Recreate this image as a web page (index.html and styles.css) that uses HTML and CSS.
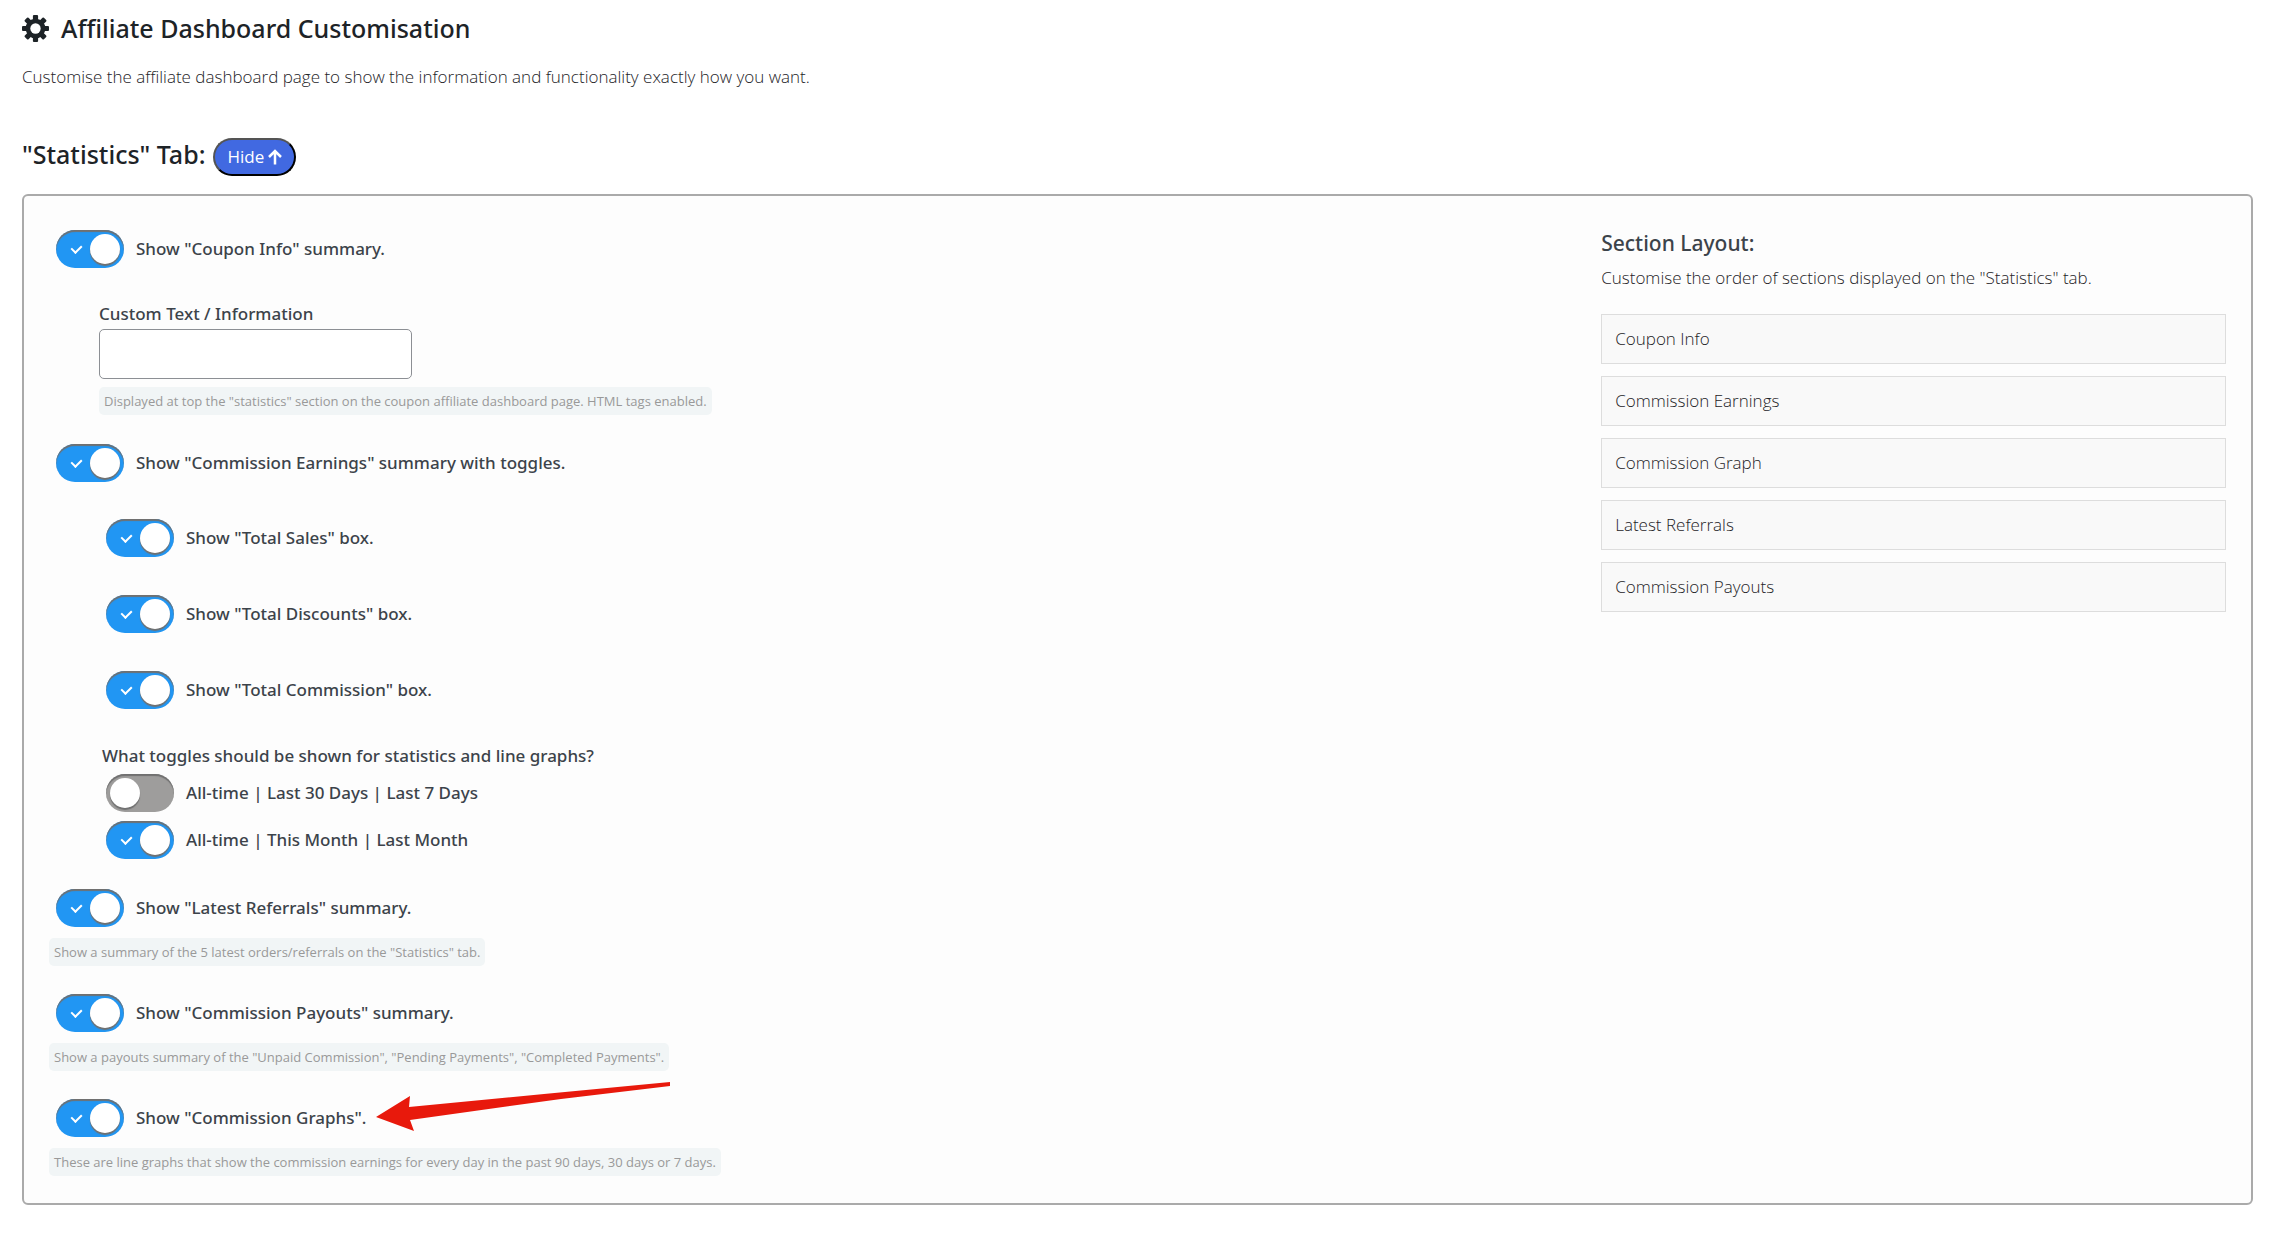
FILE: index.html
```html
<!DOCTYPE html>
<html lang="en">
<head>
<meta charset="utf-8">
<title>Affiliate Dashboard Customisation</title>
<link rel="stylesheet" href="styles.css">
</head>
<body>
<main class="page">
  <h1 class="title">
    <svg class="gear" viewBox="0 0 26 26" aria-hidden="true">
      <g fill="#1d2327">
        <rect x="10.500" y="0" width="5" height="26" rx="1"/>
        <rect x="10.500" y="0" width="5" height="26" rx="1" transform="rotate(45 13 13)"/>
        <rect x="10.500" y="0" width="5" height="26" rx="1" transform="rotate(90 13 13)"/>
        <rect x="10.500" y="0" width="5" height="26" rx="1" transform="rotate(135 13 13)"/>
        <circle cx="13" cy="13" r="9.500"/>
      </g>
      <circle cx="13" cy="13" r="5" fill="#fff"/>
    </svg>
    Affiliate Dashboard Customisation
  </h1>
  <p class="intro">Customise the affiliate dashboard page to show the information and functionality exactly how you want.</p>

  <div class="tab-head">
    <h2 class="title">"Statistics" Tab:</h2>
    <button class="hide" type="button">Hide
      <svg class="arrow-up" viewBox="0 0 14 16" aria-hidden="true"><path d="M7 15.500V2M1 8l6-6 6 6" fill="none" stroke="#fff" stroke-width="2.500"/></svg>
    </button>
  </div>

  <section class="panel">
    <form class="options">
      <label class="option"><input class="switch" type="checkbox" checked>Show "Coupon Info" summary.</label>
      <div class="field">
        <label for="custom-text">Custom Text / Information</label>
        <input class="text" id="custom-text" type="text">
        <p class="hint">Displayed at top the "statistics" section on the coupon affiliate dashboard page. HTML tags enabled.</p>
      </div>
      <label class="option"><input class="switch" type="checkbox" checked>Show "Commission Earnings" summary with toggles.</label>
      <div class="boxes">
        <label class="option"><input class="switch" type="checkbox" checked>Show "Total Sales" box.</label>
        <label class="option"><input class="switch" type="checkbox" checked>Show "Total Discounts" box.</label>
        <label class="option"><input class="switch" type="checkbox" checked>Show "Total Commission" box.</label>
      </div>
      <fieldset class="ranges">
        <legend>What toggles should be shown for statistics and line graphs?</legend>
        <label class="option"><input class="switch" type="checkbox">All-time | Last 30 Days | Last 7 Days</label>
        <label class="option"><input class="switch" type="checkbox" checked>All-time | This Month | Last Month</label>
      </fieldset>
      <div class="summary">
        <label class="option"><input class="switch" type="checkbox" checked>Show "Latest Referrals" summary.</label>
        <p class="hint">Show a summary of the 5 latest orders/referrals on the "Statistics" tab.</p>
      </div>
      <div class="summary">
        <label class="option"><input class="switch" type="checkbox" checked>Show "Commission Payouts" summary.</label>
        <p class="hint">Show a payouts summary of the "Unpaid Commission", "Pending Payments", "Completed Payments".</p>
      </div>
      <div class="summary">
        <label class="option"><input class="switch" type="checkbox" checked>Show "Commission Graphs".</label>
        <p class="hint">These are line graphs that show the commission earnings for every day in the past 90 days, 30 days or 7 days.</p>
        <svg class="pointer" viewBox="0 0 294 50" aria-hidden="true"><path d="M0 35L34 14 33 25 168 12 294 0V4L185 17 34 38 38 49Z" fill="#e8190c"/></svg>
      </div>
    </form>
    <aside class="layout">
      <h3 class="layout-title">Section Layout:</h3>
      <p class="layout-text">Customise the order of sections displayed on the "Statistics" tab.</p>
      <ul class="order">
        <li>Coupon Info</li>
        <li>Commission Earnings</li>
        <li>Commission Graph</li>
        <li>Latest Referrals</li>
        <li>Commission Payouts</li>
      </ul>
    </aside>
  </section>
</main>
</body>
</html>
```
FILE: styles.css
```css
* { box-sizing: border-box; }

body {
  margin: 0;
  background: #fff;
  color: #3c434a;
  font: 17px/26px "Open Sans", "Noto Sans", sans-serif;
}

h1, h2, h3, p, ul { margin: 0; }

.page { padding: 12px 20px 24px 22px; }

.title {
  display: flex;
  align-items: center;
  gap: 12px;
  color: #1d2327;
  font-family: "Noto Sans", "Open Sans", sans-serif;
  font-size: 25px;
  line-height: 32px;
  font-weight: 500;
}

.gear { width: 27px; height: 27px; }

.intro { margin-top: 20px; color: #1d2327; font-weight: 300; }

.tab-head {
  display: flex;
  align-items: flex-start;
  gap: 8px;
  margin-top: 48px;
}

.hide {
  display: flex;
  align-items: center;
  gap: 4px;
  height: 38px;
  padding: 0 12px;
  border: 2px outset #000;
  border-radius: 19px;
  background: #4169e1;
  color: #fff;
  font: inherit;
}

.arrow-up { width: 14px; height: 16px; }

.panel {
  display: grid;
  grid-template-columns: minmax(0, 1fr) 28.7%;
  margin-top: 18px;
  padding: 34px 25px 27px;
  border: 2px solid #aaa;
  border-radius: 6px;
  background: #fdfdfd;
}

.options {
  font-family: "Noto Sans", "Open Sans", sans-serif;
  font-weight: 500;
}

.option {
  display: flex;
  align-items: center;
  gap: 12px;
  width: fit-content;
  margin-left: 7px;
}

.switch {
  appearance: none;
  position: relative;
  width: 68px;
  height: 38px;
  margin: 0;
  border-radius: 19px;
  background: #9e9d9c;
  box-shadow: inset 0 2px 1px #707070;
}

.switch::before {
  content: "";
  position: absolute;
  top: 4px;
  left: 4px;
  width: 30px;
  height: 30px;
  border-radius: 50%;
  background: #fff;
  box-shadow: 0 2px 1px #707070;
}

.switch:checked { background: #2196f3; }
.switch:checked::before { left: 34px; }

.switch:checked::after {
  content: "";
  position: absolute;
  top: 13px;
  left: 17px;
  width: 5px;
  height: 8px;
  border: solid #fff;
  border-width: 0 2px 2px 0;
  transform: rotate(45deg);
}

.field {
  margin: 33px 0 29px 50px;
}

.field label { display: block; }

.text {
  display: block;
  width: 313px;
  height: 50px;
  margin: 2px 0 8px;
  padding: 0 12px;
  border: 1px solid #8c8f94;
  border-radius: 5px;
  background: #fff;
  font: inherit;
}

.hint {
  width: fit-content;
  padding: 0 5px;
  border-radius: 5px;
  background: #f1f5f6;
  color: #999;
  font-family: "Open Sans", "Noto Sans", sans-serif;
  font-size: 13px;
  line-height: 28px;
  font-weight: 400;
}

.boxes {
  display: grid;
  gap: 38px;
  margin: 37px 0 34px 50px;
}

.ranges {
  margin: 0 0 30px 50px;
  padding: 0;
  border: 0;
}

.ranges legend { padding: 0 3px; margin-bottom: 5px; }
.ranges .option + .option { margin-top: 9px; }

.summary { position: relative; }
.summary + .summary { margin-top: 28px; }
.summary .hint { margin-top: 11px; }

.pointer {
  position: absolute;
  top: -17px;
  left: 327px;
  width: 294px;
  height: 50px;
}

.layout { color: #1d2327; font-weight: 300; }

.layout-title {
  color: #3c434a;
  font-family: "Noto Sans", "Open Sans", sans-serif;
  font-size: 21px;
  line-height: 26px;
  font-weight: 500;
}

.layout-text { margin-top: 9px; }

.order {
  display: grid;
  gap: 12px;
  margin-top: 23px;
  padding: 0;
  list-style: none;
}

.order li {
  padding: 11px 13px;
  border: 1px solid #ddd;
  background: #f9f9f9;
}
```
